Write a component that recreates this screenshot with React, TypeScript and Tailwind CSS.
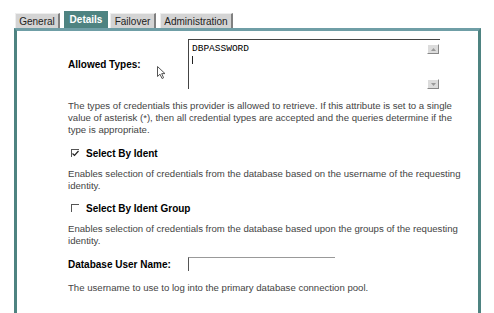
import React from "react";

const font = { fontFamily: '"Liberation Sans", Arial, sans-serif' };

function Tab({ label, active, className }: { label: string; active?: boolean; className: string }) {
  if (active) {
    return (
      <div className={`h-[17px] flex items-center justify-center bg-[#4e8381] text-white font-bold text-[10px] ${className}`}>
        {label}
      </div>
    );
  }
  return (
    <div
      className={`h-[15px] flex items-center justify-center bg-[#d4d4d4] text-[#222] text-[10px] border-t border-l border-t-[#eeeeee] border-l-[#eeeeee] border-r-2 border-r-[#808080] ${className}`}
    >
      {label}
    </div>
  );
}

function CheckBox({ checked }: { checked?: boolean }) {
  return (
    <span className="w-[8px] h-[8px] border-t border-l border-[#555] bg-white flex items-center justify-center">
      {checked && (
        <svg width="7" height="7" viewBox="0 0 7 7">
          <path d="M0.5 3.5 L2.5 5.5 L6.5 1" stroke="#222" strokeWidth="1.2" fill="none" />
        </svg>
      )}
    </span>
  );
}

function ScrollArrow({ dir }: { dir: "up" | "down" }) {
  return (
    <div className="w-[12px] h-[10px] bg-[#dcdcdc] border-b border-r border-[#888] border-t border-l border-t-white border-l-white flex items-center justify-center">
      <svg width="5" height="3" viewBox="0 0 5 3">
        {dir === "up" ? <path d="M0 3 L2.5 0 L5 3 Z" fill="#999" /> : <path d="M0 0 L2.5 3 L5 0 Z" fill="#999" />}
      </svg>
    </div>
  );
}

function Desc({ lines }: { lines: string[] }) {
  return (
    <div className="text-[9.6px] leading-[12px] text-[#444]">
      {lines.map((l) => (
        <div key={l} className="whitespace-nowrap">{l}</div>
      ))}
    </div>
  );
}

export default function App() {
  return (
    <div className="w-[494px] h-[313px] bg-white overflow-hidden pt-[11px] pl-[14px] relative" style={font}>
      {/* tabs */}
      <div className="flex items-end pl-[1px]">
        <Tab label="General" className="w-[45px]" />
        <Tab label="Details" active className="w-[44px] ml-[4px]" />
        <Tab label="Failover" className="w-[46px] ml-[2px]" />
        <Tab label="Administration" className="w-[73px] ml-[4px]" />
      </div>

      {/* panel */}
      <div className="w-[467px] h-[300px] border-t-[3px] border-l-[3px] border-r-[3px] border-[#4e8381] border-t-[#6f9ea6] pl-[51px] pt-[8px]">
        <div className="flex items-center">
          <div className="w-[120px] text-[10px] font-bold text-black">Allowed Types:</div>
          <div className="w-[252px] h-[50px] border-t border-l border-[#444] bg-white flex">
            <div className="flex-1 pl-[3px] pt-[3px]">
              <div className="text-[9.5px] leading-[11px] text-black" style={{ fontFamily: '"Liberation Mono", "Courier New", monospace' }}>
                DBPASSWORD
              </div>
              <div className="w-px h-[8px] bg-[#222] mt-[2px]" />
            </div>
            <div className="w-[13px] flex flex-col justify-between pt-[4px] pb-[0px]">
              <ScrollArrow dir="up" />
              <ScrollArrow dir="down" />
            </div>
          </div>
        </div>

        <div className="mt-[11px]">
          <Desc
            lines={[
              "The types of credentials this provider is allowed to retrieve. If this attribute is set to a single",
              "value of asterisk (*), then all credential types are accepted and the queries determine if the",
              "type is appropriate.",
            ]}
          />
        </div>

        <div className="mt-[11px] h-[12px] flex items-center pl-[3px] gap-[7px]">
          <CheckBox checked />
          <span className="text-[10px] font-bold text-black">Select By Ident</span>
        </div>

        <div className="mt-[9px]">
          <Desc
            lines={[
              "Enables selection of credentials from the database based on the username of the requesting",
              "identity.",
            ]}
          />
        </div>

        <div className="mt-[10px] h-[12px] flex items-center pl-[3px] gap-[7px]">
          <CheckBox />
          <span className="text-[10px] font-bold text-black">Select By Ident Group</span>
        </div>

        <div className="mt-[9px]">
          <Desc
            lines={[
              "Enables selection of credentials from the database based upon the groups of the requesting",
              "identity.",
            ]}
          />
        </div>

        <div className="mt-[9px] flex items-center h-[16px]">
          <div className="w-[120px] text-[10px] font-bold text-black">Database User Name:</div>
          <div className="w-[147px] h-[14px] border-t border-l border-[#555] border-t-[#999]" />
        </div>

        <div className="mt-[10px]">
          <Desc lines={["The username to use to log into the primary database connection pool."]} />
        </div>
      </div>

      {/* mouse pointer */}
      <svg className="absolute left-[157px] top-[66px]" width="10" height="14" viewBox="0 0 10 14">
        <path d="M0.5 0.5 L0.5 10.5 L3 8.2 L5 12.5 L6.6 11.8 L4.7 7.6 L8 7.6 Z" fill="white" stroke="#555" strokeWidth="1" />
      </svg>
    </div>
  );
}
